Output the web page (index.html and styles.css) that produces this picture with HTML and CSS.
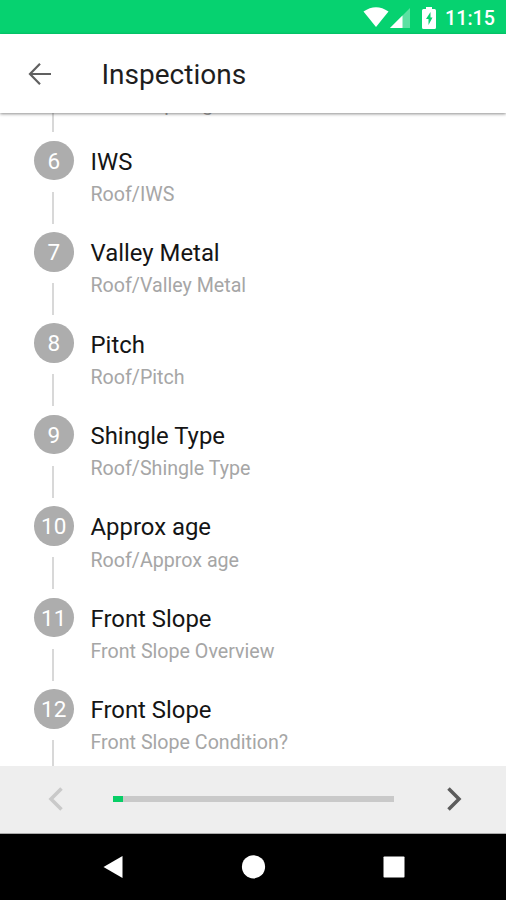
FILE: index.html
```html
<!DOCTYPE html>
<html lang="en">
<head>
<meta charset="utf-8">
<title>Inspections</title>
<link rel="stylesheet" href="styles.css">
</head>
<body>
<div class="screen">
  <div class="status">
    <svg class="wifi" width="26" height="21" viewBox="0 0 26 21"><path d="M0.500 4.500Q13-4 25.500 4.500L13 20Z"/></svg>
    <svg class="signal" width="20" height="20" viewBox="0 0 20 20"><path d="M0 20L20 0V20Z" opacity=".35"/><path d="M0 20L12.500 7.500V20Z"/></svg>
    <svg class="battery" width="14" height="22" viewBox="0 0 14 22"><path d="M4 0h6v2h2.500q1.500 0 1.500 1.500v17q0 1.500-1.500 1.500h-11Q0 22 0 20.500v-17Q0 2 1.500 2H4Z"/><path class="bolt" d="M8.500 5L4 12H6.500V18L10.500 10.500H8.500Z"/></svg>
    <span class="clock">11:15</span>
  </div>
  <header class="header">
    <svg class="back" width="24" height="24" viewBox="0 0 24 24"><path d="M23 12H2.500M12 1.800L2 12L12 22.200"/></svg>
    <h1>Inspections</h1>
  </header>
  <main class="content">
    <ol class="steps">
      <li class="passed"><div class="rail"><i></i></div><div class="text"><p>Roof/Drip Edge</p></div></li>
      <li><div class="rail"><b>6</b><i></i></div><div class="text"><h2>IWS</h2><p>Roof/IWS</p></div></li>
      <li><div class="rail"><b>7</b><i></i></div><div class="text"><h2>Valley Metal</h2><p>Roof/Valley Metal</p></div></li>
      <li><div class="rail"><b>8</b><i></i></div><div class="text"><h2>Pitch</h2><p>Roof/Pitch</p></div></li>
      <li><div class="rail"><b>9</b><i></i></div><div class="text"><h2>Shingle Type</h2><p>Roof/Shingle Type</p></div></li>
      <li><div class="rail"><b>10</b><i></i></div><div class="text"><h2>Approx age</h2><p>Roof/Approx age</p></div></li>
      <li><div class="rail"><b>11</b><i></i></div><div class="text"><h2>Front Slope</h2><p>Front Slope Overview</p></div></li>
      <li><div class="rail"><b>12</b><i></i></div><div class="text"><h2>Front Slope</h2><p>Front Slope Condition?</p></div></li>
    </ol>
  </main>
  <footer class="pager">
    <svg class="prev" width="16" height="26" viewBox="0 0 16 26"><path d="M13.500 2.500L3 13L13.500 23.500"/></svg>
    <div class="track"><div class="fill"></div></div>
    <svg class="next" width="16" height="26" viewBox="0 0 16 26"><path d="M2.500 2.500L13 13L2.500 23.500"/></svg>
  </footer>
  <nav class="nav">
    <svg width="22" height="24" viewBox="0 0 22 24"><path d="M1.500 12L20.500 1V23Z"/></svg>
    <svg width="24" height="24" viewBox="0 0 24 24"><circle cx="12.500" cy="11.800" r="11.600"/></svg>
    <svg width="22" height="22" viewBox="0 0 22 22"><rect x="1.500" y=".5" width="21" height="21" rx=".8"/></svg>
  </nav>
</div>
</body>
</html>
```
FILE: styles.css
```css
* { box-sizing: border-box; margin: 0; padding: 0; }
body { font-family: Roboto, "Liberation Sans", sans-serif; background: #fff; }
.screen { width: 506px; height: 900px; display: flex; flex-direction: column; overflow: hidden; }
.screen svg { display: block; flex: none; overflow: visible; }

.status { height: 34px; flex: none; background: #06d270; display: flex; align-items: flex-start; padding-left: 362.500px; }
.status svg { fill: #fff; }
.wifi { margin-top: 7px; }
.signal { margin: 7.500px 0 0 1.500px; }
.battery { margin: 6.500px 0 0 11.500px; }
.status .bolt { fill: #06d270; }
.clock { margin: 6px 0 0 9.500px; color: #fff; font-size: 19.700px; line-height: 25px; font-weight: 500; }

.header { height: 79px; flex: none; background: #fff; display: flex; align-items: center; padding-left: 28px; box-shadow: 0 1px 3px rgba(0, 0, 0, .45); z-index: 1; }
.back { fill: none; stroke: #606060; stroke-width: 2.200; }
.header h1 { margin: 2px 0 0 49.500px; font-size: 28px; line-height: 34px; font-weight: 400; color: #1e1e1e; }

.content { flex: 1; min-height: 0; overflow: hidden; }
.steps { list-style: none; margin: -12.700px 0 0 34px; }
.steps li { height: 91.400px; display: flex; }
.steps .passed { height: 40.400px; }
.rail { width: 39.500px; display: flex; flex-direction: column; flex: none; }
.rail b { height: 39.500px; border-radius: 50%; background: #adadad; color: #fff; font-size: 22.500px; line-height: 41px; font-weight: 400; text-align: center; }
.rail i { width: 2px; height: 32px; margin: 11.500px 0 0 18px; background: #d8d8d8; }
.passed .rail i { margin-top: 0; }
.text { margin-left: 17px; white-space: nowrap; }
.text h2 { margin-top: 6.100px; font-size: 23.900px; line-height: 30px; font-weight: 400; color: #151515; }
.text p { margin-top: 6.300px; font-size: 19.650px; line-height: 24px; color: #a6a6a6; }
.passed .text p { margin-top: -7.800px; }

.pager { height: 68px; flex: none; background: #eee; display: flex; align-items: center; padding: 0 0 2px 47.500px; border-bottom: 1px solid #aaa; }
.pager svg { fill: none; stroke-width: 3.500; }
.prev { stroke: #c9c9c9; }
.next { stroke: #5c5c5c; margin-left: 52px; }
.track { width: 281px; height: 6px; margin-left: 49.500px; background: #c9c9c9; }
.fill { width: 10px; height: 6px; background: #08ce66; }

.nav { height: 66px; flex: none; background: #000; display: flex; align-items: center; gap: 117px; padding-left: 102px; }
.nav svg { fill: #fff; }
```
